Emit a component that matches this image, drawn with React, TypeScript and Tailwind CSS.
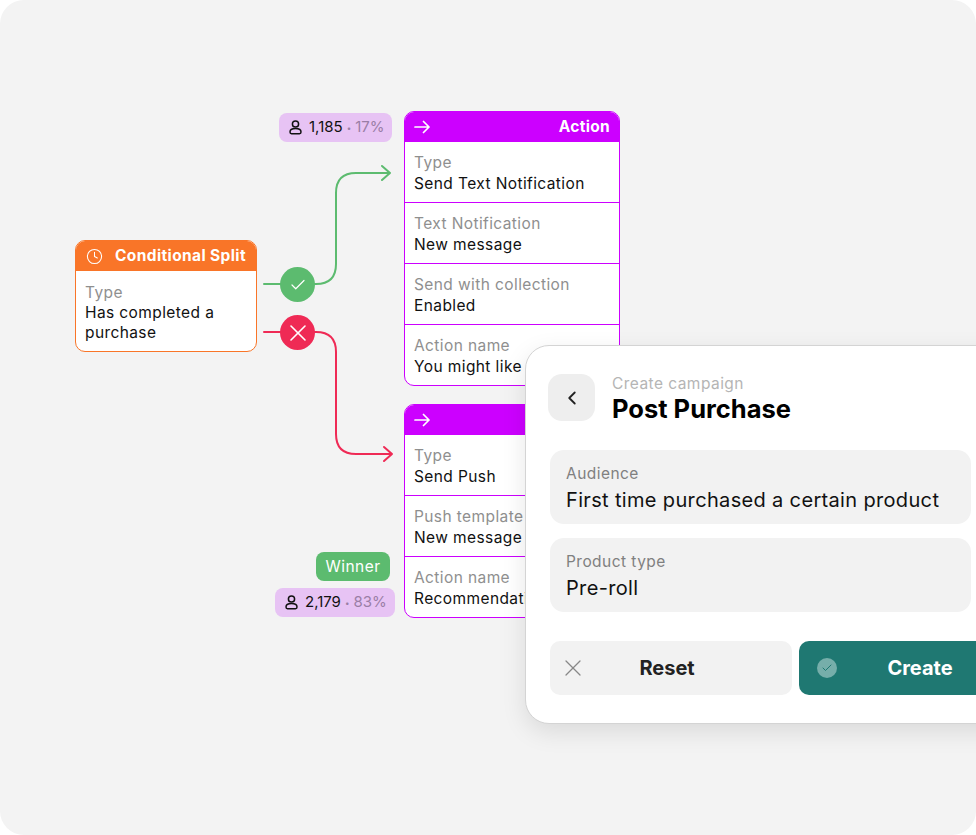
import { Check, ChevronLeft, Clock, X } from "lucide-react";

const font = { fontFamily: "Inter, sans-serif" };

function Field({ label, value }: { label: string; value: string }) {
  return (
    <div className="h-[61px] border-t border-[#cc00ff] px-[9px] pt-[11px]">
      <div className="text-[15.5px] leading-[20px] tracking-[0.4px] text-[#8f8f8f] whitespace-nowrap">{label}</div>
      <div className="text-[15.5px] leading-[21px] tracking-[0.4px] text-[#111] whitespace-nowrap">{value}</div>
    </div>
  );
}

function ActionCard({ className, rows }: { className: string; rows: string[][] }) {
  return (
    <div className={`absolute w-[216px] rounded-[10px] overflow-hidden border border-[#cc00ff] bg-white ${className}`}>
      <div className="h-[29px] bg-[#cc00ff] flex items-center justify-between pl-[9px] pr-[9px] text-white">
        <svg width="16" height="14" viewBox="0 0 16 14" fill="none" stroke="currentColor" strokeWidth="1.7" strokeLinecap="round" strokeLinejoin="round">
          <path d="M1 7H15M9.500 1.500L15 7L9.500 12.500" />
        </svg>
        <span className="text-[15.5px] font-bold tracking-[0.3px]">Action</span>
      </div>
      {rows.map((r) => (
        <Field key={r[0]} label={r[0]} value={r[1]} />
      ))}
    </div>
  );
}

function Badge({ className, count, pct }: { className: string; count: string; pct: string }) {
  return (
    <div className={`absolute h-[29px] rounded-[8px] bg-[#e7c3f4] flex items-center pl-[10px] text-[15px] whitespace-nowrap ${className}`}>
      <svg width="13" height="15" viewBox="0 0 13 15" fill="none" stroke="#111" strokeWidth="1.5" className="mr-[7px]">
        <circle cx="6.5" cy="4" r="3.1" />
        <path d="M1 12c0-2 2-3.400 5.500-3.400S12 10 12 12c0 1-.7 1.700-1.500 1.700h-8C1.700 13.700 1 13 1 12z" />
      </svg>
      <span className="text-[#111]">{count}</span>
      <span className="text-[#9a7ea6] text-[8px] ml-[4px]">•</span>
      <span className="text-[#9a7ea6] ml-[4px]">{pct}</span>
    </div>
  );
}

export default function App() {
  return (
    <div className="relative w-[976px] h-[835px] overflow-hidden bg-[#f3f3f3] rounded-[24px]" style={font}>
      {/* connectors */}
      <svg className="absolute left-0 top-0" width="976" height="835" fill="none" strokeWidth="2" strokeLinecap="round" strokeLinejoin="round">
        <path d="M264 284H316Q336 284 336 264V193Q336 173 356 173H390M382 166L390 173L382 180" stroke="#5cbb6f" />
        <path d="M264 332H316Q336 332 336 352V434Q336 454 356 454H392M384 447L392 454L384 461" stroke="#ef2a55" />
      </svg>

      <div className="absolute left-[75px] top-[240px] w-[182px] h-[112px] rounded-[10px] overflow-hidden border border-[#f97528] bg-white">
        <div className="h-[30px] bg-[#f97528] flex items-center pl-[10px] text-white">
          <Clock size={17} strokeWidth={1.5} />
          <span className="ml-[12px] text-[15.5px] font-bold tracking-[0.38px] whitespace-nowrap">Conditional Split</span>
        </div>
        <div className="px-[9px] pt-[12px] text-[15.5px] leading-[20px] tracking-[0.4px] text-[#111]">
          <div className="text-[#8f8f8f]">Type</div>
          <div>Has completed a purchase</div>
        </div>
      </div>

      <div className="absolute left-[280px] top-[267px] w-[35px] h-[35px] rounded-full bg-[#5cbb6f] flex items-center justify-center text-white">
        <Check size={18} strokeWidth={1.6} />
      </div>
      <div className="absolute left-[280px] top-[315px] w-[35px] h-[35px] rounded-full bg-[#ef2a55] flex items-center justify-center text-white">
        <X size={28} strokeWidth={1.4} />
      </div>

      <Badge className="left-[279px] top-[113px] w-[113px]" count="1,185" pct="17%" />
      <div className="absolute left-[316px] top-[552px] w-[74px] h-[29px] rounded-[8px] bg-[#5cbb6f] flex items-center justify-center pt-[1px] text-[15.5px] tracking-[0.5px] text-white">Winner</div>
      <Badge className="left-[275px] top-[588px] w-[120px]" count="2,179" pct="83%" />

      <ActionCard
        className="left-[404px] top-[111px]"
        rows={[
          ["Type", "Send Text Notification"],
          ["Text Notification", "New message"],
          ["Send with collection", "Enabled"],
          ["Action name", "You might like"],
        ]}
      />
      <ActionCard
        className="left-[404px] top-[404px]"
        rows={[
          ["Type", "Send Push"],
          ["Push template", "New message"],
          ["Action name", "Recommendation"],
        ]}
      />

      {/* campaign panel */}
      <div className="absolute left-[525px] top-[345px] w-[540px] h-[379px] rounded-[24px] bg-white border border-[#d4d4d4] shadow-[0_8px_24px_rgba(0,0,0,0.1)] pl-[24px] pt-[28px]">
        <div className="flex items-center h-[47px] -ml-[2px]">
          <div className="w-[47px] h-[47px] rounded-[14px] bg-[#eeeeee] flex items-center justify-center text-[#222]">
            <ChevronLeft size={22} strokeWidth={2} />
          </div>
          <div className="ml-[17px] mt-[3px]">
            <div className="text-[15.5px] leading-[20px] tracking-[0.45px] text-[#b5b5b5]">Create campaign</div>
            <div className="text-[25.5px] leading-[30px] font-bold text-black">Post Purchase</div>
          </div>
        </div>
        <div className="mt-[29px] flex flex-col gap-[14px]">
          <div className="w-[421px] h-[74px] rounded-[14px] bg-[#f2f2f2] pl-[16px] pt-[14px]">
            <div className="text-[15.5px] leading-[20px] tracking-[0.45px] text-[#808080]">Audience</div>
            <div className="text-[20px] leading-[32px] tracking-[0.34px] text-[#111] whitespace-nowrap">First time purchased a certain product</div>
          </div>
          <div className="w-[421px] h-[74px] rounded-[14px] bg-[#f2f2f2] pl-[16px] pt-[14px]">
            <div className="text-[15.5px] leading-[20px] tracking-[0.45px] text-[#808080]">Product type</div>
            <div className="text-[20px] leading-[32px] tracking-[0.34px] text-[#111]">Pre-roll</div>
          </div>
        </div>
        <div className="mt-[29px] flex gap-[7px]">
          <div className="relative w-[242px] h-[54px] rounded-[10px] bg-[#f2f2f2] flex items-center justify-center pr-[8px] text-[20px] font-bold text-[#222]">
            <X size={28} strokeWidth={1.1} className="absolute left-[9px] text-[#888]" />
            Reset
          </div>
          <div className="relative w-[242px] h-[54px] rounded-[10px] bg-[#1f7872] flex items-center justify-center text-[20px] font-bold text-white">
            <span className="absolute left-[18px] w-[20px] h-[20px] rounded-full bg-[#76aeaa] flex items-center justify-center text-[#1f7872]">
              <Check size={12} strokeWidth={2} />
            </span>
            Create
          </div>
        </div>
      </div>
    </div>
  );
}
